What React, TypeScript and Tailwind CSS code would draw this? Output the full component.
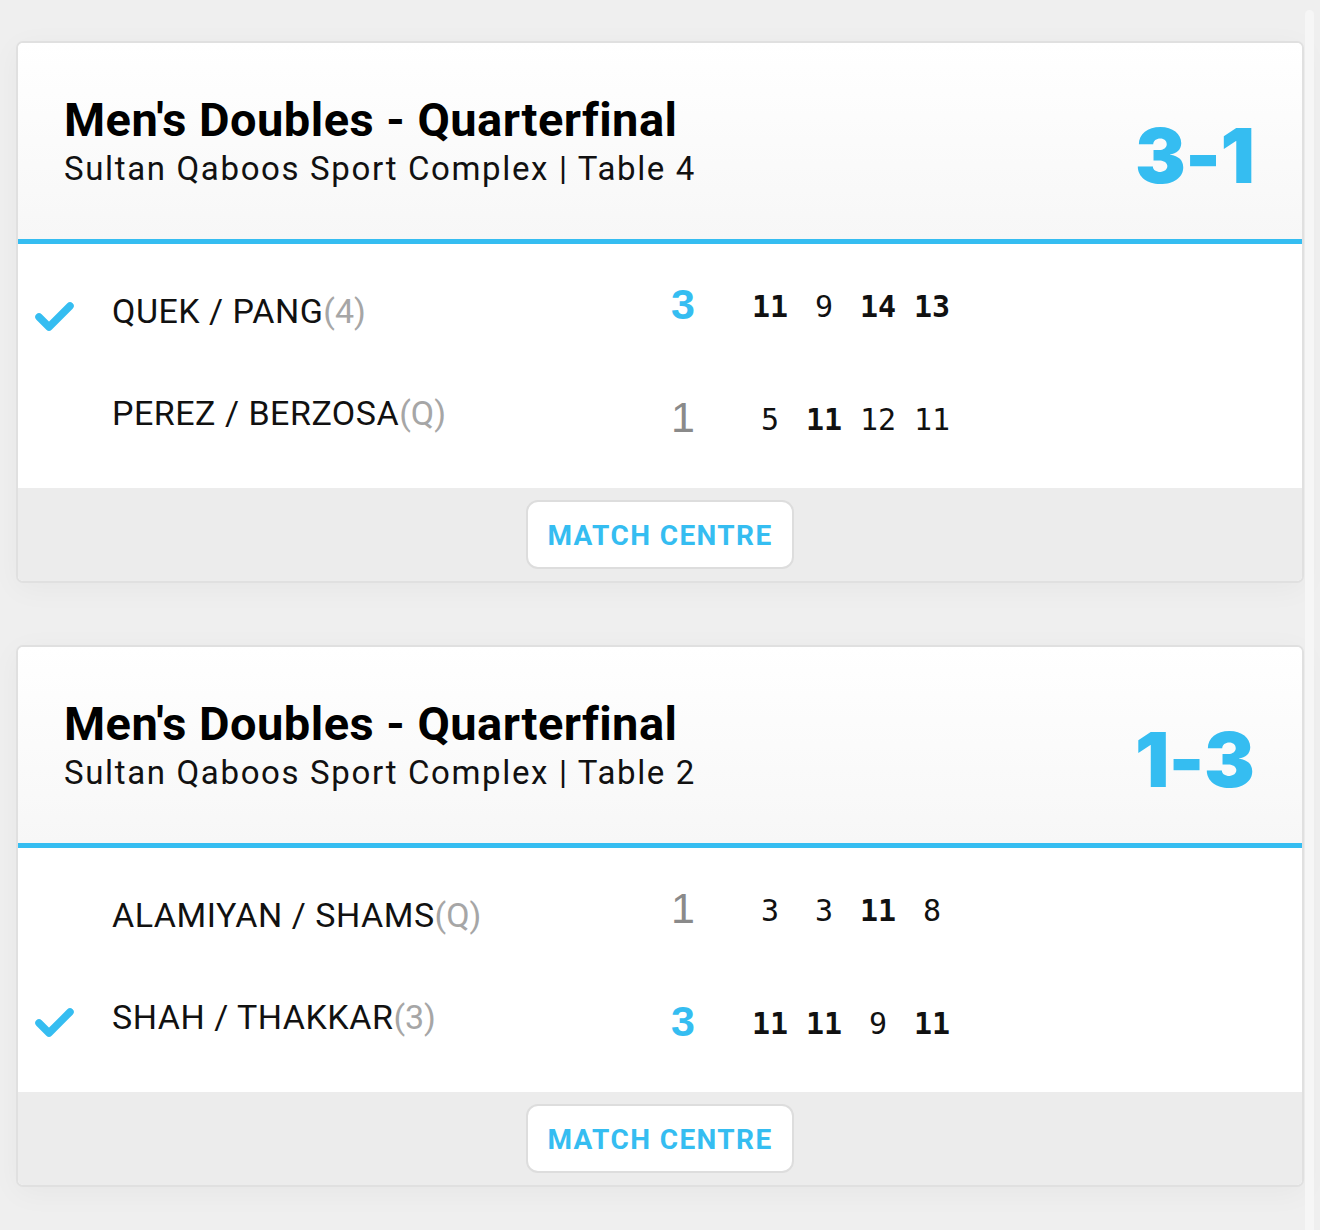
import React from "react";

type Row = { name: string; seed: string; winner: boolean; score: number; sets: { v: number; bold: boolean }[] };
type Match = { title: string; venue: string; result: string; rows: Row[] };

const matches: Match[] = [
  {
    title: "Men's Doubles - Quarterfinal",
    venue: "Sultan Qaboos Sport Complex | Table 4",
    result: "3-1",
    rows: [
      { name: "QUEK / PANG", seed: "(4)", winner: true, score: 3, sets: [{ v: 11, bold: true }, { v: 9, bold: false }, { v: 14, bold: true }, { v: 13, bold: true }] },
      { name: "PEREZ / BERZOSA", seed: "(Q)", winner: false, score: 1, sets: [{ v: 5, bold: false }, { v: 11, bold: true }, { v: 12, bold: false }, { v: 11, bold: false }] },
    ],
  },
  {
    title: "Men's Doubles - Quarterfinal",
    venue: "Sultan Qaboos Sport Complex | Table 2",
    result: "1-3",
    rows: [
      { name: "ALAMIYAN / SHAMS", seed: "(Q)", winner: false, score: 1, sets: [{ v: 3, bold: false }, { v: 3, bold: false }, { v: 11, bold: true }, { v: 8, bold: false }] },
      { name: "SHAH / THAKKAR", seed: "(3)", winner: true, score: 3, sets: [{ v: 11, bold: true }, { v: 11, bold: true }, { v: 9, bold: false }, { v: 11, bold: true }] },
    ],
  },
];

function Check() {
  return (
    <svg width="41" height="32" viewBox="0 0 41 32" fill="none">
      <polyline points="5,17 15,27 36,6" stroke="#35bdf1" strokeWidth="7.5" strokeLinecap="round" strokeLinejoin="round" />
    </svg>
  );
}

function Card({ m }: { m: Match }) {
  return (
    <div className="w-[1288px] rounded-[7px] border-2 border-[#e0e0e0] bg-white overflow-hidden shadow-[0_6px_30px_rgba(0,0,0,0.04)]">
      <div className="h-[196px] flex items-center justify-between pl-[46px] pr-[48px] bg-gradient-to-b from-white to-[#f7f7f7]">
        <div className="flex flex-col font-['Roboto',sans-serif]">
          <div className="text-[47px] leading-[52px] font-bold text-black tracking-[0.01em]">{m.title}</div>
          <div className="mt-[3px] text-[33px] leading-[40px] text-[#111] tracking-[0.05em]">{m.venue}</div>
        </div>
        <div className="mt-[28px] text-[76px] leading-none font-black text-[#35bdf1] font-['Inter',sans-serif] tracking-[-0.01em]">{m.result}</div>
      </div>
      <div className="h-[5px] bg-[#35bdf1]" />
      <div className="h-[244px] flex bg-white">
        <div className="w-[635px] flex flex-col pt-[16px]">
          {m.rows.map((r, i) => (
            <div key={i} className="h-[102px] flex items-center">
              <div className="w-[94px] pl-[16px] pt-[10px]">{r.winner ? <Check /> : null}</div>
              <div className="text-[34px] text-[#111] font-['Roboto',sans-serif] tracking-[0.015em]">
                {r.name}
                <span className="text-[#a6a6a6] tracking-normal">{r.seed}</span>
              </div>
            </div>
          ))}
        </div>
        <div className="flex flex-col pt-[4px]">
          {m.rows.map((r, i) => (
            <div key={i} className="h-[113px] flex items-center">
              <div
                className={
                  r.winner
                    ? "w-[60px] text-center text-[43px] font-bold text-[#35bdf1] font-['Liberation_Sans',sans-serif]"
                    : "w-[60px] text-center text-[43px] font-normal text-[#8a8a8a] font-['Liberation_Sans',sans-serif]"
                }
              >
                {r.score}
              </div>
              <div className="ml-[30px] flex pt-[4px]">
                {r.sets.map((s, j) => (
                  <div
                    key={j}
                    className={
                      s.bold
                        ? "w-[54px] text-center text-[30px] font-bold text-[#111] font-['DejaVu_Sans_Mono',monospace]"
                        : "w-[54px] text-center text-[30px] font-normal text-[#111] font-['DejaVu_Sans_Mono',monospace]"
                    }
                  >
                    {s.v}
                  </div>
                ))}
              </div>
            </div>
          ))}
        </div>
      </div>
      <div className="h-[93px] bg-[#ececec] flex items-center justify-center">
        <div className="w-[268px] h-[69px] rounded-[12px] border-2 border-[#dddddd] bg-white flex items-center justify-center pt-[2px]">
          <span className="text-[28px] font-bold text-[#35bdf1] font-['Roboto',sans-serif] tracking-[0.05em]">MATCH CENTRE</span>
        </div>
      </div>
    </div>
  );
}

export default function App() {
  return (
    <div className="w-[1320px] h-[1230px] bg-[#efefef] flex">
      <div className="flex flex-col gap-[62px] pl-[16px] pt-[41px]">
        {matches.map((m, i) => (
          <Card key={i} m={m} />
        ))}
      </div>
      <div className="ml-[1px] mt-[10px] w-[9px] h-[1220px] rounded-t-[5px] bg-[#f6f6f6]" />
    </div>
  );
}
